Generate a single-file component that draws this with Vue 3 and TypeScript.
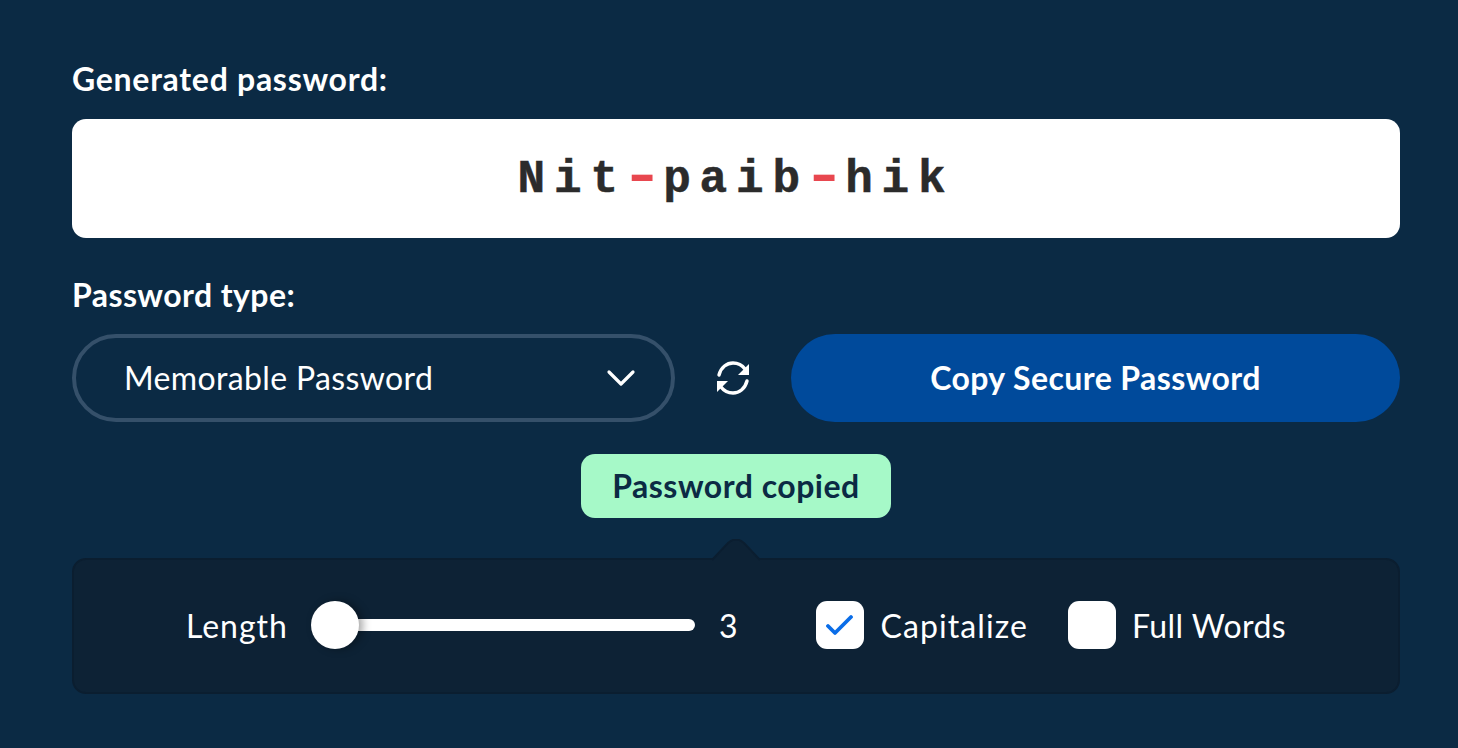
<script setup lang="ts">
const parts: { text: string; dash: boolean }[] = [
  { text: 'Nit', dash: false },
  { text: '-', dash: true },
  { text: 'paib', dash: false },
  { text: '-', dash: true },
  { text: 'hik', dash: false },
]
</script>

<template>
  <main class="page">
    <h2 class="label first ls-a">Generated password:</h2>
    <div class="output">
      <span class="pw"><span v-for="(p, i) in parts" :key="i" :class="{ dash: p.dash }">{{ p.text }}</span></span>
    </div>
    <h2 class="label second ls-b">Password type:</h2>
    <div class="controls">
      <div class="select">
        <span class="ls-e raise">Memorable Password</span>
        <svg class="chev" width="30" height="20" viewBox="0 0 30 20" fill="none">
          <path d="M3 4 L15 16 L27 4" stroke="#fff" stroke-width="3.2" stroke-linecap="round" stroke-linejoin="round" />
        </svg>
      </div>
      <svg class="refresh" width="34" height="34" viewBox="0 0 34 34" fill="none">
        <path d="M3 14 C5 6 11 2 17 2 C22 2 26 4 29 8" stroke="#fff" stroke-width="3.4" stroke-linecap="round" />
        <path d="M31 20 C29 28 23 32 17 32 C12 32 8 30 5 26" stroke="#fff" stroke-width="3.4" stroke-linecap="round" />
        <path d="M33 3 V14 H22 Z" fill="#fff" />
        <path d="M1 31 V20 H12 Z" fill="#fff" />
      </svg>
      <button class="copy"><span class="raise">Copy Secure Password</span></button>
    </div>
    <div class="toast-row">
      <div class="toast"><span class="raise">Password copied</span></div>
    </div>
    <section class="panel">
      <svg class="notch" width="48" height="22" viewBox="0 0 48 22">
        <path d="M0 21 L16 4 Q24 -3 32 4 L48 21" fill="#0d2235" stroke="#0b1e30" stroke-width="2" />
      </svg>
      <span class="txt ls-c">Length</span>
      <div class="slider">
        <div class="track"></div>
        <div class="thumb"></div>
      </div>
      <span class="txt num">3</span>
      <label class="check cap">
        <span class="box">
          <svg width="28" height="24" viewBox="0 0 28 24" fill="none">
            <path d="M2 13 L9 20 L25 4" stroke="#0a6de8" stroke-width="3.8" stroke-linecap="round" stroke-linejoin="round" />
          </svg>
        </span>
        <span class="txt ls-d">Capitalize</span>
      </label>
      <label class="check full">
        <span class="box"></span>
        <span class="txt ls-b">Full Words</span>
      </label>
    </section>
  </main>
</template>

<style>
html, body { margin: 0; background: #0b2a44; }
</style>

<style scoped>
.page {
  box-sizing: border-box;
  width: 1458px;
  height: 748px;
  padding: 0 58px 0 72px;
  background: #0b2a44;
  font-family: Lato, "Noto Sans", sans-serif;
  color: #fff;
  overflow: hidden;
}
.label {
  margin: 0;
  font-size: 32px;
  line-height: 36px;
  font-weight: 700;
}
.ls-a { letter-spacing: 0.72px; }
.ls-b { letter-spacing: 0.42px; }
.ls-c { letter-spacing: 1px; }
.ls-d { letter-spacing: 1.1px; }
.ls-e { letter-spacing: 0.36px; }
.raise { position: relative; top: -1px; }
.first { padding-top: 61px; }
.second { margin-top: 39px; }
.output {
  margin-top: 22px;
  height: 119px;
  padding-top: 2px;
  box-sizing: border-box;
  border-radius: 14px;
  background: #fff;
  display: flex;
  align-items: center;
  justify-content: center;
}
.pw {
  font-family: "Liberation Mono", monospace;
  font-weight: 700;
  font-size: 46px;
  letter-spacing: 8.8px;
  color: #2b2b2b;
  -webkit-text-stroke: 0.5px #2b2b2b;
  white-space: nowrap;
}
.dash {
  display: inline-block;
  position: relative;
  top: 11px;
  left: -3px;
  width: 36.4px;
  text-align: center;
  font-family: Lato, sans-serif;
  font-weight: 400;
  font-size: 84px;
  line-height: 0;
  letter-spacing: 0;
  color: #e8474f;
  -webkit-text-stroke: 0;
}
.controls {
  margin-top: 21px;
  display: flex;
  align-items: center;
  height: 88px;
}
.select {
  box-sizing: border-box;
  width: 603px;
  height: 88px;
  border: 4px solid #35506a;
  border-radius: 44px;
  padding: 0 35px 0 48px;
  display: flex;
  align-items: center;
  justify-content: space-between;
  font-size: 32px;
}
.refresh { margin: 0 41px; flex: none; }
.copy {
  flex: 1;
  height: 88px;
  border: 0;
  border-radius: 44px;
  background: #004a9b;
  color: #fff;
  font: 700 32px Lato, "Noto Sans", sans-serif;
  letter-spacing: 0.42px;
}
.toast-row {
  margin-top: 32px;
  display: flex;
  justify-content: center;
  height: 64px;
}
.toast {
  width: 310px;
  height: 64px;
  border-radius: 14px;
  background: #a6f9c8;
  color: #0b2a44;
  font-size: 32px;
  letter-spacing: 0.5px;
  font-weight: 700;
  display: flex;
  align-items: center;
  justify-content: center;
}
.panel {
  position: relative;
  box-sizing: border-box;
  margin-top: 40px;
  height: 136px;
  border: 2px solid #0b1e30;
  border-radius: 14px;
  background: #0d2235;
  display: flex;
  align-items: center;
  justify-content: center;
  padding-bottom: 2px;
}
.notch { position: absolute; left: 638px; top: -21px; }
.txt { font-size: 32px; }
.slider {
  position: relative;
  width: 384px;
  height: 48px;
  margin-left: 23px;
}
.track {
  position: absolute;
  left: 24px;
  right: 0;
  top: 18px;
  height: 12px;
  border-radius: 6px;
  background: #fff;
}
.thumb {
  position: absolute;
  left: 0;
  top: 0;
  width: 48px;
  height: 48px;
  border-radius: 50%;
  background: #fff;
  box-shadow: 4px 0 8px rgba(0, 0, 0, 0.35);
}
.num { margin-left: 24px; }
.check { display: flex; align-items: center; gap: 16px; }
.cap { margin-left: 79px; }
.full { margin-left: 40px; }
.box {
  box-sizing: border-box;
  width: 48px;
  height: 48px;
  border-radius: 11px;
  background: #fff;
  display: flex;
  align-items: center;
  justify-content: center;
}
</style>
